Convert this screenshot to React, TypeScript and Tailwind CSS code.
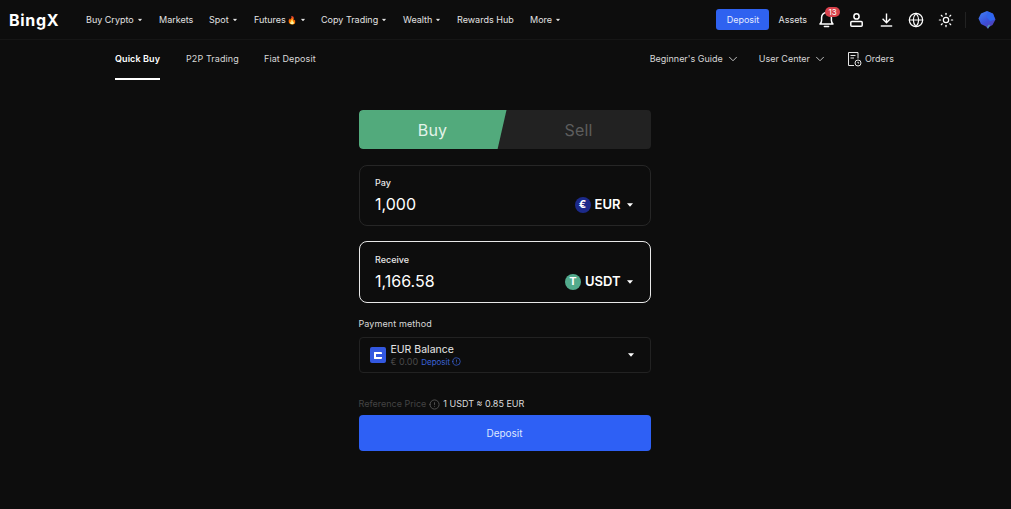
import { ChevronDown, Globe, Sun, Info } from "lucide-react";

const navItems = [
  { label: "Buy Crypto", caret: true, width: "w-[73px]" },
  { label: "Markets", caret: false, width: "w-[50px]" },
  { label: "Spot", caret: true, width: "w-[45px]" },
  { label: "Futures", caret: true, fire: true, width: "w-[67px]" },
  { label: "Copy Trading", caret: true, width: "w-[82px]" },
  { label: "Wealth", caret: true, width: "w-[54px]" },
  { label: "Rewards Hub", caret: false, width: "w-[73px]" },
  { label: "More", caret: true, width: "w-[40px]" },
];

function Caret({ className = "" }: { className?: string }) {
  return (
    <svg width="6" height="4" viewBox="0 0 6 4" className={className}>
      <path d="M0 0.3h6L3 3.7z" fill="currentColor" />
    </svg>
  );
}

function Bell() {
  return (
    <svg width="15" height="17" viewBox="0 0 15 17" fill="none" stroke="white" strokeWidth="1.5">
      <path d="M1 13h13c-1-1-1.6-2-1.6-3.6V6.4a4.9 4.9 0 0 0-9.8 0v3C2.6 11 2 12 1 13z" strokeLinejoin="round" />
      <path d="M5.4 15.6h4.2" strokeLinecap="round" />
    </svg>
  );
}

function User() {
  return (
    <svg width="13" height="14" viewBox="0 0 13 14" fill="none" stroke="white" strokeWidth="1.5">
      <circle cx="6.5" cy="3.4" r="2.6" />
      <rect x="0.8" y="8.6" width="11.4" height="4.6" rx="1" />
    </svg>
  );
}

function DownloadIcon() {
  return (
    <svg width="13" height="14" viewBox="0 0 13 14" fill="none" stroke="white" strokeWidth="1.4">
      <path d="M6.5 0.5v9M2.6 5.8l3.9 3.9 3.9-3.9" />
      <path d="M0.8 13h11.4" />
    </svg>
  );
}

function OrbLogo() {
  return (
    <svg width="18" height="20" viewBox="0 0 18 20">
      <defs>
        <linearGradient id="orb" x1="0.2" y1="0" x2="0.8" y2="1">
          <stop offset="0" stopColor="#3f7cf5" />
          <stop offset="0.55" stopColor="#3a4fd8" />
          <stop offset="1" stopColor="#5a3aa8" />
        </linearGradient>
      </defs>
      <path d="M9 1l6 2.5 2.5 6-3 5.5-3.5 2-1 2-2-2.500-5-2.500L0.500 8.500 3 3.500z" fill="url(#orb)" />
      <path d="M9.500 1.500l5.500 2.500 2 5.500-5 1.500-3.500-4z" fill="#2f66ee" />
      <path d="M9 17l2-2.500 1 1-2 3z" fill="#4f9bb0" />
    </svg>
  );
}

function Orders() {
  return (
    <svg width="14" height="15" viewBox="0 0 14 15" fill="none" stroke="#e5e5e5" strokeWidth="1">
      <path d="M6 13.500H0.500v-13h9.500v6" />
      <path d="M2.500 3.500h5M2.500 6h3.500" />
      <circle cx="10" cy="11" r="3" />
      <path d="M10 9.800V11h1.100" />
    </svg>
  );
}

function AmountCard({
  label,
  value,
  symbol,
  icon,
  active,
}: {
  label: string;
  value: string;
  symbol: string;
  icon: React.ReactNode;
  active?: boolean;
}) {
  return (
    <div
      className={`rounded-lg border pl-[15.5px] pr-[17px] ${
        active ? "h-[62px] pt-[11px] border-[#e8e8e8]" : "h-[61px] pt-[10px] border-[#262626]"
      }`}
    >
      <div className="text-[9px] leading-[14px] font-medium text-[#e8e8e8]">{label}</div>
      <div className="flex items-center justify-between mt-[1px] h-[26px]">
        <span className="text-[16px] text-white">{value}</span>
        <div className="flex items-center pt-[1px]">
          {icon}
          <span className="ml-[4px] text-[13px] font-semibold text-white">{symbol}</span>
          <Caret className="ml-[6px] text-white" />
        </div>
      </div>
    </div>
  );
}

export default function App() {
  return (
    <div className="w-[1011px] h-[509px] bg-[#0d0d0d] overflow-hidden font-['Inter',sans-serif] text-white">
      <header className="h-10 flex items-center border-b border-[#161616] pl-[9px] pr-[15px]">
        <span className="w-[77px] text-[16px] font-bold tracking-[0.7px] text-white leading-none">BingX</span>
        <nav className="flex items-center text-[9px] text-[#e2e2e2]">
          {navItems.map((item) => (
            <div key={item.label} className={`flex items-center ${item.width}`}>
              <span>{item.label}</span>
              {item.fire && <span className="ml-[1px] text-[8px] leading-none">🔥</span>}
              {item.caret && <Caret className="ml-[3px] scale-75" />}
            </div>
          ))}
        </nav>
        <div className="ml-auto flex items-center">
          <button className="w-[53px] h-[21px] rounded-[3px] bg-[#2f62f0] text-[9px] text-[#e6ecff]">Deposit</button>
          <span className="ml-[9px] text-[9px] text-[#e2e2e2]">Assets</span>
          <div className="relative ml-[12px] flex">
            <Bell />
            <span className="absolute -top-[4px] left-[6px] w-[15px] h-[10px] rounded-full bg-[#d9434c] text-[8px] leading-[10px] text-center text-white">
              13
            </span>
          </div>
          <div className="ml-[16px] flex"><User /></div>
          <div className="ml-[17px] flex"><DownloadIcon /></div>
          <Globe size={16} color="white" strokeWidth={1.8} className="ml-[15px]" />
          <Sun size={16} color="white" strokeWidth={1.8} className="ml-[14px]" />
          <div className="ml-[11px] w-px h-4 bg-[#222]" />
          <div className="ml-[12px] flex"><OrbLogo /></div>
        </div>
      </header>

      <div className="h-10 flex items-stretch pl-[115px] pr-[117px] text-[9px] text-[#d8d8d8]">
        <div className="w-[71px] flex flex-col tracking-[0.1px]">
          <div className="flex-1 flex items-center font-semibold text-white">
            <span className="w-[45px] text-center whitespace-nowrap">Quick Buy</span>
          </div>
          <div className="w-[45px] h-[2px] bg-white" />
        </div>
        <div className="w-[78px] flex items-center pb-[2px] tracking-[0.1px]">P2P Trading</div>
        <div className="flex items-center pb-[2px] tracking-[0.1px]">Fiat Deposit</div>
        <div className="ml-auto flex items-center pb-[2px]">
          <span>Beginner's Guide</span>
          <ChevronDown size={14} strokeWidth={1.5} className="ml-[3px]" />
          <span className="ml-[19px]">User Center</span>
          <ChevronDown size={14} strokeWidth={1.5} className="ml-[3px]" />
          <div className="ml-[21px] flex"><Orders /></div>
          <span className="ml-[3px]">Orders</span>
        </div>
      </div>

      <main className="w-[292px] mx-auto mt-[30px] -translate-x-px">
        <div className="h-[39px] rounded-[4px] bg-[#222222] flex overflow-hidden relative">
          <div className="w-[148px] bg-[#52aa7c] [clip-path:polygon(0_0,100%_0,94%_100%,0_100%)] rounded-l-[4px] flex items-center justify-center text-[16px] tracking-[0.2px] text-[#e3f3ea]">
            Buy
          </div>
          <div className="flex-1 flex items-center justify-center text-[16px] tracking-[0.2px] text-[#5d5d5d]">Sell</div>
        </div>

        <div className="mt-4">
          <AmountCard
            label="Pay"
            value="1,000"
            symbol="EUR"
            icon={
              <span className="w-[16px] h-[16px] rounded-full bg-[#1c2a8a] flex items-center justify-center text-[11px] font-bold text-white">
                €
              </span>
            }
          />
        </div>
        <div className="mt-[15px]">
          <AmountCard
            label="Receive"
            value="1,166.58"
            symbol="USDT"
            active
            icon={
              <span className="w-[16px] h-[16px] rounded-full bg-[#52aa8c] flex items-center justify-center text-[11px] font-bold text-white">
                T
              </span>
            }
          />
        </div>

        <div className="mt-[14px] text-[9px] tracking-[0.1px] leading-[14px] text-[#d8d8d8]">Payment method</div>
        <div className="mt-[6px] h-[36px] rounded-[4px] border border-[#222] flex items-center pl-[10px] pr-[16px]">
          <div className="w-[16px] h-[16px] rounded-[2px] bg-[#3358e0] flex items-center justify-center">
            <div className="w-[8px] h-[7px] rounded-[1px] border-2 border-r-0 border-white" />
          </div>
          <div className="ml-[5px] pt-[1px]">
            <div className="text-[10.5px] leading-[12px] text-[#e8e8e8]">EUR Balance</div>
            <div className="flex items-center text-[8px] leading-[12px]">
              <span className="text-[#4a4a4a] text-[9px]">€ 0.00</span>
              <span className="ml-[3px] text-[#3a62d8]">Deposit</span>
              <Info size={9} color="#3a62d8" className="ml-[2px] rotate-180" />
            </div>
          </div>
          <Caret className="ml-auto text-white" />
        </div>

        <div className="mt-[24px] h-[14px] flex items-center text-[9px]">
          <span className="text-[#444]">Reference Price</span>
          <Info size={11} color="#555" className="ml-[3px] rotate-180" />
          <span className="ml-[3px] text-[#dcdcdc]">1 USDT ≈ 0.85 EUR</span>
        </div>
        <button className="mt-[4px] w-full h-9 rounded-[4px] bg-[#2e60f5] text-[10px] text-[#dfe7ff]">Deposit</button>
      </main>
    </div>
  );
}
